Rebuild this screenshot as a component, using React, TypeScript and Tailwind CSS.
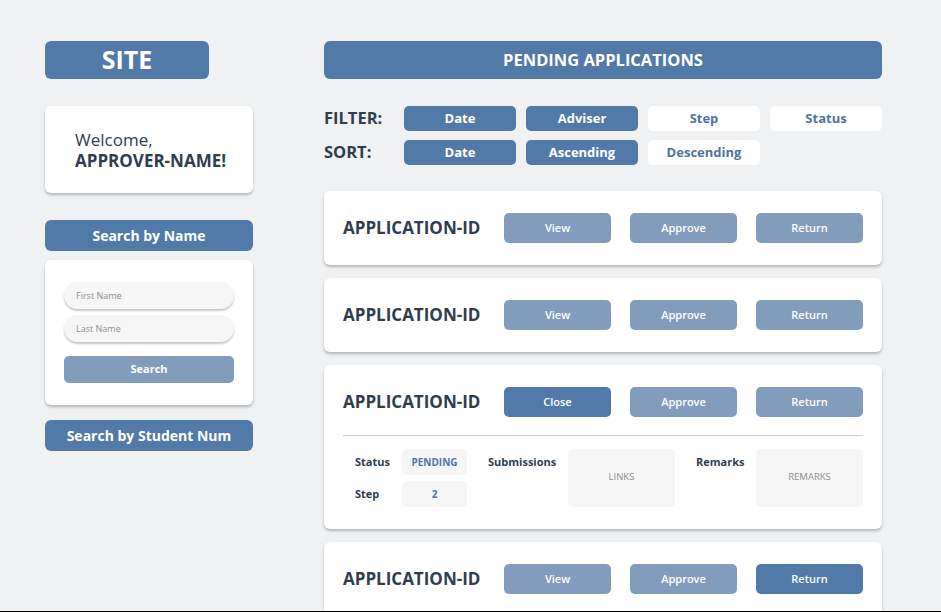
import React from "react";

const font = { fontFamily: '"Open Sans", "Liberation Sans", sans-serif' };

const Pill = ({ label, active }: { label: string; active: boolean }) => (
  <div
    className={`w-[112px] h-[25px] rounded-[5px] flex items-center justify-center text-[13px] font-bold ${
      active ? "bg-[#517aa8] text-white" : "bg-white text-[#4f74a3]"
    }`}
  >
    {label}
  </div>
);

const ActionBtn = ({ label, dark }: { label: string; dark?: boolean }) => (
  <div
    className={`w-[107px] h-[30px] rounded-[5px] flex items-center justify-center text-[11px] font-semibold text-white ${
      dark ? "bg-[#517aa8]" : "bg-[#829dbb]"
    }`}
  >
    {label}
  </div>
);

const AppCard = ({
  first,
  darkReturn,
  children,
}: {
  first: string;
  darkReturn?: boolean;
  children?: React.ReactNode;
}) => (
  <div className="bg-white rounded-[6px] shadow-[0_2px_3px_rgba(0,0,0,0.25)] px-[19px] shrink-0">
    <div className="h-[74px] flex items-center">
      <div className="w-[161px] text-[17px] font-bold text-[#2f3e4e]">APPLICATION-ID</div>
      <div className="flex gap-[19px]">
        <ActionBtn label={first} dark={first === "Close"} />
        <ActionBtn label="Approve" />
        <ActionBtn label="Return" dark={darkReturn} />
      </div>
    </div>
    {children}
  </div>
);

const Details = () => (
  <div className="-mt-[4px] pb-[22px]">
    <div className="h-px bg-[#c9cdd2]" />
    <div className="flex mt-[13px] text-[11px]">
      <div className="flex flex-col gap-[6px] pl-[12px]">
        <div className="flex items-center">
          <span className="w-[47px] font-bold text-[#2f3e4e]">Status</span>
          <div className="w-[65px] h-[26px] rounded-[5px] bg-[#f6f6f6] flex items-center justify-center text-[10px] font-bold text-[#4f74a3]">
            PENDING
          </div>
        </div>
        <div className="flex items-center">
          <span className="w-[47px] font-bold text-[#2f3e4e]">Step</span>
          <div className="w-[65px] h-[26px] rounded-[5px] bg-[#f6f6f6] flex items-center justify-center text-[10px] font-bold text-[#4f74a3]">
            2
          </div>
        </div>
      </div>
      <div className="flex ml-[21px]">
        <span className="w-[80px] h-[26px] flex items-center font-bold text-[#2f3e4e]">Submissions</span>
        <div className="w-[107px] h-[58px] rounded-[5px] bg-[#f6f6f6] flex items-center justify-center pb-[2px] text-[9.5px] text-[#8a8f95]">
          LINKS
        </div>
      </div>
      <div className="flex ml-[21px]">
        <span className="w-[60px] h-[26px] flex items-center font-bold text-[#2f3e4e]">Remarks</span>
        <div className="w-[107px] h-[58px] rounded-[5px] bg-[#f6f6f6] flex items-center justify-center pb-[2px] text-[9.5px] text-[#8a8f95]">
          REMARKS
        </div>
      </div>
    </div>
  </div>
);

export default function App() {
  return (
    <div
      className="h-[612px] overflow-hidden bg-[#eff1f3] border-b border-black flex gap-[71px] pl-[45px] pt-[41px]"
      style={font}
    >
      <aside className="w-[208px] flex flex-col shrink-0">
        <div className="w-[164px] h-[38px] shrink-0 rounded-[6px] bg-[#517aa8] flex items-center justify-center text-white text-[25px] font-bold">
          SITE
        </div>
        <div className="mt-[27px] h-[87px] shrink-0 bg-white rounded-[6px] shadow-[0_2px_3px_rgba(0,0,0,0.25)] flex flex-col justify-center pl-[30px] text-[#2f3e4e] text-[17px] leading-[21px]">
          <span>Welcome,</span>
          <span className="font-bold">APPROVER-NAME!</span>
        </div>
        <div className="mt-[27px] h-[31px] shrink-0 rounded-[6px] bg-[#517aa8] flex items-center justify-center text-white text-[14px] font-bold">
          Search by Name
        </div>
        <div className="mt-[9px] h-[145px] shrink-0 bg-white rounded-[6px] shadow-[0_2px_3px_rgba(0,0,0,0.25)] px-[19px] pt-[22px] flex flex-col">
          <div className="h-[27px] shrink-0 rounded-full bg-[#f6f6f6] shadow-[0_2px_2px_rgba(0,0,0,0.22)] flex items-center pl-[12px] text-[9px] text-[#8a8f95]">
            First Name
          </div>
          <div className="mt-[6px] h-[27px] shrink-0 rounded-full bg-[#f6f6f6] shadow-[0_2px_2px_rgba(0,0,0,0.22)] flex items-center pl-[12px] text-[9px] text-[#8a8f95]">
            Last Name
          </div>
          <div className="mt-[14px] h-[27px] shrink-0 rounded-[5px] bg-[#829dbb] flex items-center justify-center text-white text-[11px] font-bold">
            Search
          </div>
        </div>
        <div className="mt-[15px] h-[31px] shrink-0 rounded-[6px] bg-[#517aa8] flex items-center justify-center text-white text-[14px] font-bold">
          Search by Student Num
        </div>
      </aside>

      <main className="w-[558px] flex flex-col">
        <div className="h-[38px] shrink-0 rounded-[6px] bg-[#517aa8] flex items-center justify-center text-white text-[16.5px] font-bold">
          PENDING APPLICATIONS
        </div>
        <div className="mt-[27px] flex flex-col gap-[9px] shrink-0">
          <div className="flex items-center">
            <span className="w-[80px] text-[16.5px] font-bold text-[#2f3e4e]">FILTER:</span>
            <div className="flex gap-[10px]">
              <Pill label="Date" active />
              <Pill label="Adviser" active />
              <Pill label="Step" active={false} />
              <Pill label="Status" active={false} />
            </div>
          </div>
          <div className="flex items-center">
            <span className="w-[80px] text-[16.5px] font-bold text-[#2f3e4e]">SORT:</span>
            <div className="flex gap-[10px]">
              <Pill label="Date" active />
              <Pill label="Ascending" active />
              <Pill label="Descending" active={false} />
            </div>
          </div>
        </div>
        <div className="mt-[26px] flex flex-col gap-[13px] shrink-0">
          <AppCard first="View" />
          <AppCard first="View" />
          <AppCard first="Close">
            <Details />
          </AppCard>
          <AppCard first="View" darkReturn />
        </div>
      </main>
    </div>
  );
}
